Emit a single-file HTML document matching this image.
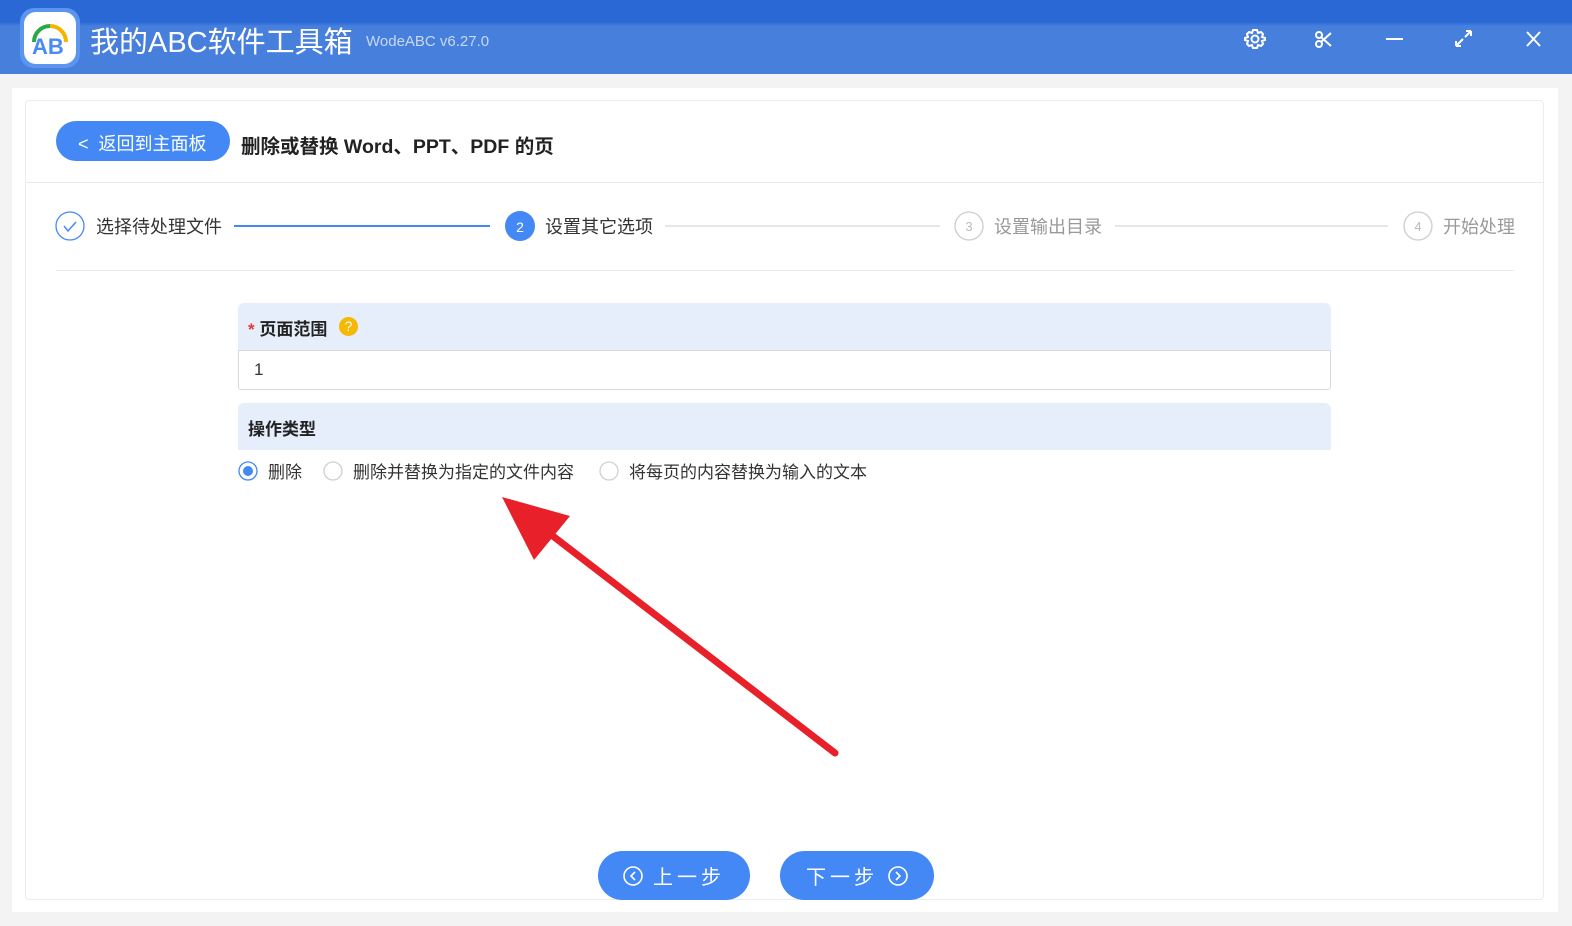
<!DOCTYPE html><html><head><meta charset="utf-8"><style>
*{margin:0;padding:0;box-sizing:border-box}
body{width:1572px;height:926px;background:#f3f3f3;font-family:"Liberation Sans","Noto Sans CJK SC",sans-serif;position:relative;overflow:hidden;color:#333}
.hdr{position:absolute;left:0;top:0;width:1572px;height:74px;background:linear-gradient(#2a68d6 0,#2a68d6 22px,#477fdc 26px,#477fdc 100%)}
.abs{position:absolute}
.t{white-space:nowrap}
</style></head><body>
<div class="hdr"></div>
<div class="abs" style="left:20px;top:8px;width:60px;height:60px;border-radius:14px;background:#5a95f0"></div>
<div class="abs" style="left:24px;top:12px;width:52px;height:52px;border-radius:12px;background:#fff"></div>
<svg class="abs" style="left:24px;top:12px" width="52" height="52"><path d="M10 30 A16 16 0 0 1 26 14" stroke="#2aa84a" stroke-width="4" fill="none"/><path d="M26 14 A16 16 0 0 1 42 30" stroke="#f4b400" stroke-width="4" fill="none"/><text x="8" y="42" font-family="Liberation Sans" font-size="22" font-weight="bold" fill="#4a8af4">AB</text></svg>
<div class="abs t" style="left:90px;top:19px;font-size:29px;color:#fff">我的ABC软件工具箱</div>
<div class="abs t" style="left:366px;top:33px;font-size:15px;color:#c8d8f6">WodeABC v6.27.0</div>
<svg class="abs" style="left:1240px;top:24px" width="310" height="32" fill="none" stroke="#fff" stroke-width="2">
<circle cx="15" cy="15" r="3.5"/><path d="M15 6l2 0 1 3 3-1 2 2-1 3 3 1v2l-3 1 1 3-2 2-3-1-1 3h-4l-1-3-3 1-2-2 1-3-3-1v-2l3-1-1-3 2-2 3 1 1-3z"/>
<circle cx="79" cy="11" r="3"/><circle cx="79" cy="20" r="3"/><path d="M81 13l10 9M81 18l10-9"/>
<path d="M146 15h17"/>
<path d="M216 22l7-7M216 22v-5M216 22h5M231 7l-6 6M231 7h-5M231 7v5"/>
<path d="M287 8l13 14M300 8l-13 14"/></svg>
<div class="abs" style="left:12px;top:88px;width:1546px;height:824px;background:#fff"></div>
<div class="abs" style="left:25px;top:100px;width:1519px;height:800px;border:1px solid #ececec;border-radius:4px"></div>
<div class="abs" style="left:26px;top:182px;width:1517px;height:1px;background:#eaeaea"></div>
<div class="abs" style="left:56px;top:121px;width:174px;height:40px;border-radius:20px;background:#4388f5"></div>
<div class="abs t" style="left:78px;top:130px;font-size:18px;color:#fff">&lt;&nbsp; 返回到主面板</div>
<div class="abs t" style="left:241px;top:130px;font-size:19.5px;font-weight:bold;color:#222">删除或替换 Word、PPT、PDF 的页</div>
<svg class="abs" style="left:54px;top:210px" width="1480" height="34">
<circle cx="16" cy="16" r="14" fill="none" stroke="#4388f5" stroke-width="1.3"/><path d="M10 16l4 5 8-9" stroke="#4388f5" stroke-width="1.5" fill="none"/>
<line x1="180" y1="16" x2="436" y2="16" stroke="#4388f5" stroke-width="2"/>
<circle cx="466" cy="16" r="15" fill="#4388f5"/><text x="466" y="22" font-size="14" fill="#fff" text-anchor="middle" font-family="Liberation Sans">2</text>
<line x1="611" y1="16" x2="886" y2="16" stroke="#ddd" stroke-width="1.5"/>
<circle cx="915" cy="16" r="14" fill="none" stroke="#ccc" stroke-width="1.3"/><text x="915" y="21" font-size="13" fill="#bbb" text-anchor="middle" font-family="Liberation Sans">3</text>
<line x1="1061" y1="16" x2="1334" y2="16" stroke="#ddd" stroke-width="1.5"/>
<circle cx="1364" cy="16" r="14" fill="none" stroke="#ccc" stroke-width="1.3"/><text x="1364" y="21" font-size="13" fill="#bbb" text-anchor="middle" font-family="Liberation Sans">4</text></svg>
<div class="abs t" style="left:96px;top:213px;font-size:18px;color:#333">选择待处理文件</div>
<div class="abs t" style="left:545px;top:213px;font-size:18px;color:#333">设置其它选项</div>
<div class="abs t" style="left:994px;top:213px;font-size:18px;color:#999">设置输出目录</div>
<div class="abs t" style="left:1443px;top:213px;font-size:18px;color:#999">开始处理</div>
<div class="abs" style="left:56px;top:270px;width:1458px;height:1px;background:#eaeaea"></div>
<div class="abs" style="left:238px;top:303px;width:1093px;height:48px;background:#e6eefb;border-radius:6px 6px 0 0"></div>
<div class="abs t" style="left:248px;top:315px;font-size:17px;font-weight:bold;color:#222"><span style="color:#e53935">*</span> 页面范围</div>
<div class="abs" style="left:339px;top:317px;width:19px;height:19px;border-radius:50%;background:#f6b800;color:#fff;font-size:14px;text-align:center;line-height:19px">?</div>
<div class="abs" style="left:238px;top:350px;width:1093px;height:40px;border:1px solid #d9d9d9;border-radius:0 0 3px 3px;background:#fff"></div>
<div class="abs t" style="left:254px;top:360px;font-size:17px;color:#333">1</div>
<div class="abs" style="left:238px;top:403px;width:1093px;height:47px;background:#e6eefb;border-radius:6px 6px 0 0"></div>
<div class="abs t" style="left:248px;top:415px;font-size:17px;font-weight:bold;color:#222">操作类型</div>
<svg class="abs" style="left:236px;top:459px" width="400" height="24"><circle cx="12" cy="12" r="9" fill="#fff" stroke="#4388f5" stroke-width="1.3"/><circle cx="12" cy="12" r="5" fill="#4388f5"/><circle cx="97" cy="12" r="9" fill="#fff" stroke="#d0d0d0" stroke-width="1.3"/><circle cx="373" cy="12" r="9" fill="#fff" stroke="#d0d0d0" stroke-width="1.3"/></svg>
<div class="abs t" style="left:268px;top:458px;font-size:17px;color:#333">删除</div>
<div class="abs t" style="left:353px;top:458px;font-size:17px;color:#333">删除并替换为指定的文件内容</div>
<div class="abs t" style="left:629px;top:458px;font-size:17px;color:#333">将每页的内容替换为输入的文本</div>
<svg class="abs" style="left:0;top:0" width="1572" height="926"><line x1="835" y1="753" x2="545" y2="530" stroke="#e8202a" stroke-width="7" stroke-linecap="round"/><polygon points="502,497 570,516 534,560" fill="#e8202a"/></svg>
<div class="abs" style="left:598px;top:851px;width:152px;height:49px;border-radius:25px;background:#4388f5"></div>
<div class="abs" style="left:780px;top:851px;width:154px;height:49px;border-radius:25px;background:#4388f5"></div>
<svg class="abs" style="left:0;top:0" width="1572" height="926" fill="none" stroke="#fff" stroke-width="1.6"><circle cx="633" cy="876" r="9"/><path d="M635 872l-4 4 4 4"/><circle cx="898" cy="876" r="9"/><path d="M896 872l4 4-4 4"/></svg>
<div class="abs t" style="left:653px;top:861px;font-size:20px;color:#fff;letter-spacing:4px">上一步</div>
<div class="abs t" style="left:806px;top:861px;font-size:20px;color:#fff;letter-spacing:4px">下一步</div>
</body></html>
